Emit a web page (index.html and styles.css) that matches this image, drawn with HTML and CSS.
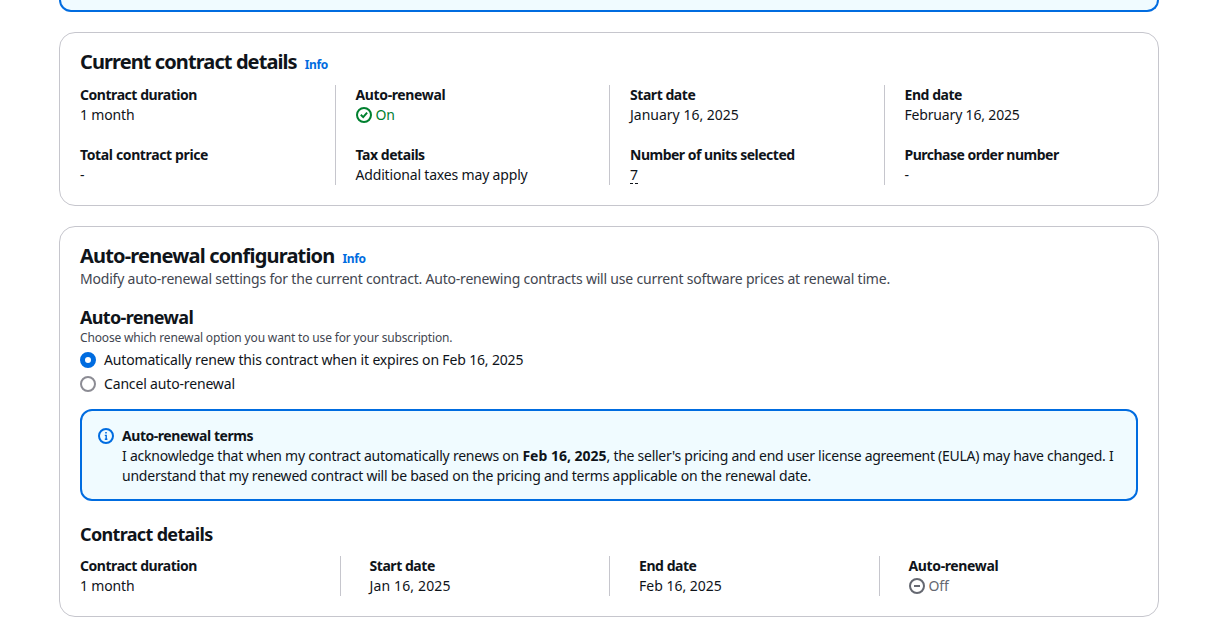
FILE: index.html
```html
<!DOCTYPE html>
<html lang="en">
<head>
<meta charset="utf-8">
<title>Contract details</title>
<link rel="stylesheet" href="styles.css">
</head>
<body>
<main class="page">
  <div class="banner"></div>
  <section class="card current">
    <div class="heading"><h2>Current contract details</h2><a class="info">Info</a></div>
    <div class="columns">
      <div class="col"><dl><dt>Contract duration</dt><dd>1 month</dd></dl><dl><dt class="loose">Total contract price</dt><dd>-</dd></dl></div>
      <div class="col"><dl><dt class="loose">Auto-renewal</dt><dd class="status on"><svg class="icon" viewBox="0 0 16 16"><circle cx="8" cy="8" r="7"/><path d="m4.8 7.8 2.4 2.3 3.9-4.4"/></svg>On</dd></dl><dl><dt>Tax details</dt><dd>Additional taxes may apply</dd></dl></div>
      <div class="col"><dl><dt>Start date</dt><dd class="date">January 16, 2025</dd></dl><dl><dt class="tight">Number of units selected</dt><dd><span class="dashed">7</span></dd></dl></div>
      <div class="col"><dl><dt>End date</dt><dd>February 16, 2025</dd></dl><dl><dt class="tight">Purchase order number</dt><dd>-</dd></dl></div>
    </div>
  </section>
  <section class="card config">
    <div class="heading"><h2>Auto-renewal configuration</h2><a class="info">Info</a></div>
    <p class="description">Modify auto-renewal settings for the current contract. Auto-renewing contracts will use current software prices at renewal time.</p>
    <h3>Auto-renewal</h3>
    <p class="hint">Choose which renewal option you want to use for your subscription.</p>
    <div class="options">
      <div class="option"><span class="radio checked"></span><span>Automatically renew this contract when it expires on Feb 16, 2025</span></div>
      <div class="option"><span class="radio"></span><span>Cancel auto-renewal</span></div>
    </div>
    <div class="alert">
      <svg class="icon" viewBox="0 0 16 16"><circle cx="8" cy="8" r="7"/><path class="thin" d="M7.2 4.7h1.6M6.8 7.4h1.4v3.8M6.8 11.2h2.6"/></svg>
      <div class="terms"><b>Auto-renewal terms</b><p>I acknowledge that when my contract automatically renews on <b class="date">Feb 16, 2025</b><span class="rest">, the seller's pricing and end user license agreement (EULA) may have changed. I</span></p><p>understand that my renewed contract will be based on the pricing and terms applicable on the renewal date.</p></div>
    </div>
    <h3>Contract details</h3>
    <div class="columns summary">
      <div class="col"><dl><dt>Contract duration</dt><dd>1 month</dd></dl></div>
      <div class="col"><dl><dt>Start date</dt><dd class="date short">Jan 16, 2025</dd></dl></div>
      <div class="col"><dl><dt>End date</dt><dd class="date">Feb 16, 2025</dd></dl></div>
      <div class="col"><dl><dt class="loose">Auto-renewal</dt><dd class="status off"><svg class="icon" viewBox="0 0 16 16"><circle cx="8" cy="8" r="7"/><path d="M5 8h6"/></svg>Off</dd></dl></div>
    </div>
  </section>
</main>
</body>
</html>
```
FILE: styles.css
```css
* { box-sizing: border-box; margin: 0; padding: 0; }
body { background: #fff; color: #0f141a; font: 14px/20px "Noto Sans", "Open Sans", sans-serif; overflow: hidden; }
.page { width: 1100px; margin-left: 59px; }
.banner { height: 12px; border: 2px solid #006ce0; border-top: 0; border-radius: 0 0 12px 12px; background: #f0fbff; }
.card { border: 1px solid #c6c6cd; border-radius: 16px; padding: 17px 20px 0; }
.current { margin-top: 20px; height: 174px; }
.config { margin-top: 20px; height: 391px; }
.heading { display: flex; align-items: baseline; gap: 8px; height: 24px; line-height: 24px; }
h2, h3 { font-weight: 700; }
h2 { font-size: 20px; line-height: 24px; letter-spacing: -0.91px; }
.config h2 { letter-spacing: -0.81px; }
h3 { font-size: 18px; line-height: 22px; letter-spacing: -0.66px; }
.info { color: #006ce0; font-size: 12px; font-weight: 700; letter-spacing: -0.4px; }
.columns { display: grid; grid-template-columns: repeat(4, 274.5px); margin-top: 11px; }
.col { display: flex; flex-direction: column; gap: 20px; }
.col + .col { border-left: 1px solid #c6c6cd; padding-left: 20px; margin-left: -20px; }
.summary { grid-template-columns: 289.5px repeat(3, 269.5px); }
.summary .col + .col { padding-left: 29px; margin-left: -30px; }
dt, b { font-weight: 700; letter-spacing: -0.45px; }
dt, dd, p { white-space: nowrap; }
dd { letter-spacing: -0.17px; }
.loose { letter-spacing: -0.37px; }
.tight { letter-spacing: -0.5px; }
.date { letter-spacing: 0; }
.short { letter-spacing: 0.14px; }
.status { display: flex; align-items: center; gap: 4px; }
.icon { width: 16px; height: 16px; fill: none; stroke: currentColor; stroke-width: 2; flex: none; }
.thin { stroke-width: 1.4; }
.on { color: #00802f; }
.off { color: #656871; }
.dashed { display: inline-block; height: 19px; border-bottom: 1px dashed currentColor; }
.description { margin: 1px 0 17px; color: #424650; letter-spacing: -0.2px; }
.hint { color: #424650; font-size: 12px; letter-spacing: -0.16px; }
.options { display: grid; gap: 4px; padding: 2px 0 15px; }
.option { display: flex; align-items: center; gap: 8px; height: 20px; letter-spacing: -0.16px; }
.radio { width: 16px; height: 16px; border: 2px solid #8c8c94; border-radius: 50%; }
.checked { border: 5px solid #006ce0; }
.alert { display: flex; gap: 8px; height: 92px; border: 2px solid #006ce0; border-radius: 12px; background: #f0fbff; padding: 15px 16px 13px; margin-bottom: 22px; letter-spacing: -0.23px; }
.rest { letter-spacing: -0.27px; }
.alert .icon { color: #006ce0; margin-top: 2px; }
```
